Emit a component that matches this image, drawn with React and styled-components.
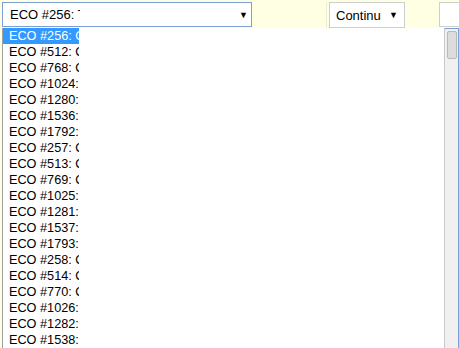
import styled, { createGlobalStyle } from "styled-components"

const Global = createGlobalStyle`
  html, body {
    margin: 0;
    padding: 0;
    background: #ffffe3;
    font-family: "Liberation Sans", Arial, sans-serif;
  }
`

const Page = styled.div`
  position: relative;
  width: 459px;
  height: 348px;
  overflow: hidden;
`

const Toolbar = styled.div`
  display: flex;
  align-items: flex-start;
  padding-top: 2px;
  height: 26px;
`

const Select = styled.div`
  display: flex;
  align-items: center;
  box-sizing: border-box;
  height: ${(p) => p.h || 25}px;
  width: ${(p) => p.w}px;
  margin-left: ${(p) => p.ml || 0}px;
  background: #fff;
  border: 1px solid ${(p) => (p.focus ? "#7b9ed6" : "#cfcfcf")};
  font-size: 13px;
  color: #000;
  padding-left: ${(p) => p.pl || 7}px;
  padding-right: ${(p) => p.pr || 5}px;
`

const Label = styled.span`
  width: ${(p) => p.w}px;
  overflow: hidden;
  white-space: nowrap;
`

const Arrow = styled.span`
  margin-left: auto;
  font-size: 9px;
`

const Divider = styled.div`
  width: 1px;
  height: 26px;
  background: #ececd0;
  margin-left: ${(p) => p.ml}px;
`

const Input = styled.div`
  box-sizing: border-box;
  width: 20px;
  height: 25px;
  margin-left: 34px;
  background: #fff;
  border: 1px solid #cfcfcf;
  border-right: none;
`

const Dropdown = styled.div`
  position: absolute;
  top: 28px;
  left: 2px;
  width: 457px;
  height: 320px;
  display: flex;
`

const List = styled.ul`
  list-style: none;
  margin: 0;
  padding: 0;
  flex: 1;
  background: #fff;
  border-left: 1px solid #a0a0a0;
  border-right: 1px solid #c8c8c8;
`

const Item = styled.li`
  height: 16px;
  line-height: 16px;
  width: 70px;
  padding-left: 6px;
  font-size: 12.7px;
  white-space: nowrap;
  overflow: hidden;
  color: ${(p) => (p.active ? "#fff" : "#000")};
  background: ${(p) => (p.active ? "#3399ff" : "transparent")};
`

const Scrollbar = styled.div`
  width: 14px;
  background: #f0f0f0;
  border-right: 1px solid #7b9ed6;
  border-top: 1px solid #7b9ed6;
  padding: 2px 0 0 1px;
  box-sizing: border-box;
`

const Thumb = styled.div`
  width: 10px;
  height: 28px;
  box-sizing: border-box;
  margin-left: 1px;
  background: #dcdcdc;
  border: 1px solid #b8b8b8;
  border-radius: 2px;
`

const items = [256, 512, 768, 1024, 1280, 1536, 1792, 257, 513, 769, 1025, 1281, 1537, 1793, 258, 514, 770, 1026, 1282, 1538]

export default function App() {
  return (
    <>
      <Global />
      <Page>
        <Toolbar>
          <Select w={250} ml={2} pr={3} focus>
            <Label w={70}>ECO #256: The</Label>
            <Arrow>▼</Arrow>
          </Select>
          <Divider ml={74} />
          <Select w={76} ml={2} pl={6} pr={6} h={26}>
            <Label w={45}>Continue</Label>
            <Arrow>▼</Arrow>
          </Select>
          <Input />
        </Toolbar>
        <Dropdown>
          <List>
            {items.map((n, i) => (
              <Item key={n} active={i === 0}>ECO #{n}: Opening</Item>
            ))}
          </List>
          <Scrollbar>
            <Thumb />
          </Scrollbar>
        </Dropdown>
      </Page>
    </>
  )
}
